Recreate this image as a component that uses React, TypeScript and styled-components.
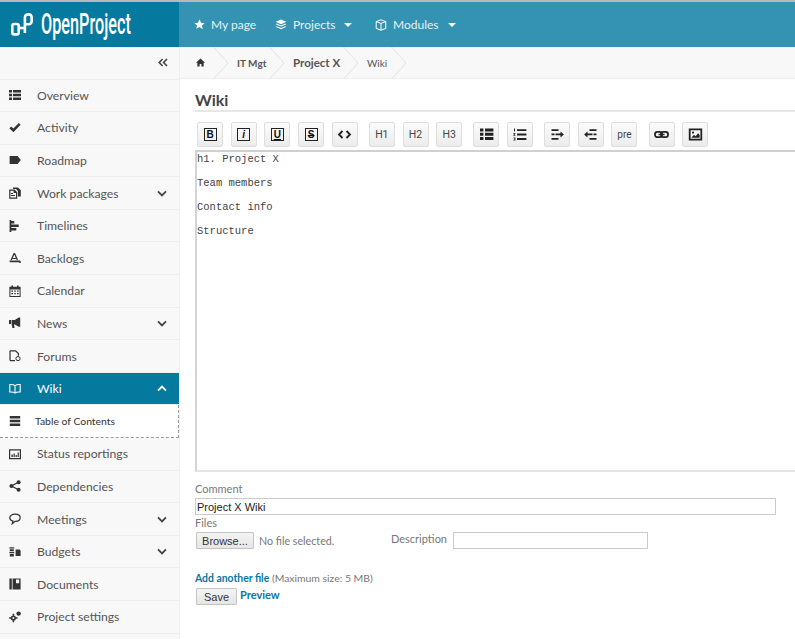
import React from 'react';
import styled, { createGlobalStyle } from 'styled-components';

const Global = createGlobalStyle`
    html, body {
        margin: 0;
        padding: 0;
        height: 100%;
        overflow: hidden;
        background: #fff;
        font-family: Lato, "Open Sans", sans-serif;
    }
`;

const Page = styled.div`
    width: 795px;
    height: 639px;
    overflow: hidden;
    border-top: 2px solid #b9b9b9;
    box-sizing: border-box;
`;

const Header = styled.header`
    height: 45px;
    display: flex;
    background: #3493b3;
`;

const Logo = styled.div`
    width: 179px;
    flex: none;
    background: #06799f;
    display: flex;
    align-items: center;
    padding-left: 11px;
    box-sizing: border-box;
    gap: 8px;
    color: #fff;
    svg {
        flex: none;
    }
`;

const LogoText = styled.span`
    font-family: Roboto, sans-serif;
    font-weight: 500;
    font-size: 29px;
    line-height: 1;
    display: inline-block;
    transform: scaleX(0.56);
    transform-origin: left center;
    white-space: nowrap;
`;

const Nav = styled.nav`
    display: flex;
    align-items: center;
    padding-left: 15px;
`;

const NavItem = styled.a<{ $width: number }>`
    width: ${(p) => p.$width}px;
    display: flex;
    align-items: center;
    color: #e6f1f5;
    font-size: 12px;
    gap: 6px;
    text-decoration: none;
    svg {
        flex: none;
    }
`;

const Caret = styled.span`
    width: 0;
    height: 0;
    margin-left: 3px;
    border-left: 4px solid transparent;
    border-right: 4px solid transparent;
    border-top: 4px solid #fff;
`;

const Body = styled.div`
    display: flex;
    height: 592px;
`;

const Sidebar = styled.aside`
    width: 180px;
    flex: none;
    background: #f8f8f8;
    border-right: 1px solid #efefef;
    box-sizing: border-box;
`;

const CollapseRow = styled.div`
    height: 32.5px;
    display: flex;
    align-items: center;
    justify-content: flex-end;
    padding-right: 11px;
    border-bottom: 1px solid #eeeeee;
    box-sizing: border-box;
`;

const MenuItem = styled.div<{ $active?: boolean; $sub?: boolean }>`
    height: 32.6px;
    box-sizing: border-box;
    display: flex;
    align-items: center;
    padding-left: 9px;
    padding-right: 12px;
    font-size: ${(p) => (p.$sub ? 10.4 : 12.2)}px;
    color: ${(p) => (p.$active ? '#fff' : p.$sub ? '#333' : '#555')};
    background: ${(p) => (p.$active ? '#06799f' : p.$sub ? '#fff' : 'transparent')};
    border-bottom: ${(p) => (p.$sub ? '1px dashed #999' : '1px solid #efefef')};
    border-right: ${(p) => (p.$sub ? '1px dashed #999' : 'none')};
    svg {
        flex: none;
    }
`;

const MenuLabel = styled.span<{ $sub?: boolean }>`
    flex: 1;
    margin-left: ${(p) => (p.$sub ? 14 : 16)}px;
    white-space: nowrap;
`;

const Main = styled.main`
    flex: 1;
    min-width: 0;
`;

const Breadcrumbs = styled.div`
    height: 32px;
    display: flex;
    align-items: center;
    background: #f8f8f8;
    border-bottom: 1px solid #eeeeee;
    box-sizing: border-box;
    padding-left: 16px;
`;

const Crumb = styled.span<{ $size: number; $bold?: boolean; $width: number }>`
    width: ${(p) => p.$width}px;
    font-size: ${(p) => p.$size}px;
    font-weight: ${(p) => (p.$bold ? 700 : 400)};
    color: #555;
    white-space: nowrap;
`;

const CrumbSep = styled.svg`
    width: 16px;
    height: 32px;
    flex: none;
    margin-right: 8px;
`;

const Content = styled.div`
    padding: 11px 0 0 15px;
`;

const Title = styled.h2`
    margin: 0;
    font-size: 16px;
    line-height: 20px;
    font-weight: 700;
    color: #444;
    border-bottom: 2px solid #e7e7e7;
`;

const Toolbar = styled.div`
    display: flex;
    gap: 7.7px;
    padding: 10px 0 3px 2px;
`;

const ToolButton = styled.button<{ $gapBefore?: boolean; $plain?: boolean }>`
    width: 26px;
    height: 25px;
    padding: 0;
    margin: 0 0 0 ${(p) => (p.$gapBefore ? 3.4 : 0)}px;
    flex: none;
    border: 1px solid #dedede;
    border-radius: 2px;
    background: linear-gradient(#fbfbfb, #ececec);
    display: flex;
    align-items: center;
    justify-content: center;
    font-family: Roboto, "Liberation Sans", sans-serif;
    font-size: ${(p) => (p.$plain ? 10 : 10.5)}px;
    color: #444;
`;

const BoxedLetter = styled.span<{ $italic?: boolean; $strike?: boolean; $under?: boolean }>`
    width: 13px;
    height: 13px;
    box-sizing: border-box;
    border: 1.5px solid #222;
    display: flex;
    align-items: center;
    justify-content: center;
    font-family: "Liberation Sans", sans-serif;
    font-weight: 700;
    font-size: 10px;
    line-height: 1;
    color: #111;
    font-style: ${(p) => (p.$italic ? 'italic' : 'normal')};
    text-decoration: ${(p) => (p.$strike ? 'line-through' : p.$under ? 'underline' : 'none')};
`;

const Editor = styled.textarea`
    display: block;
    width: 640px;
    height: 322px;
    margin: 0;
    padding: 1px 0;
    box-sizing: border-box;
    border: 1px solid #c9c9c9;
    border-bottom: 2px solid #e4e4e4;
    border-left: 2px solid #d4d4d4;
    border-top: 2px solid #d0d0d0;
    outline: none;
    resize: none;
    overflow: hidden;
    font-family: "Liberation Mono", monospace;
    font-size: 10.5px;
    line-height: 12px;
    color: #444;
`;

const FieldLabel = styled.div`
    font-size: 11px;
    line-height: 13px;
    color: #777;
`;

const CommentLabel = styled(FieldLabel)`
    margin-top: 10px;
    margin-bottom: 3px;
`;

const FilesLabel = styled(FieldLabel)`
    margin-top: 1px;
    margin-bottom: 3px;
`;

const TextInput = styled.input<{ $width: number }>`
    display: block;
    width: ${(p) => p.$width}px;
    height: 17px;
    box-sizing: border-box;
    padding: 0 1px;
    border: 1px solid #cbcbcb;
    outline: none;
    font-family: "Liberation Sans", sans-serif;
    font-size: 11px;
    color: #222;
`;

const FileRow = styled.div`
    display: flex;
    align-items: center;
    padding-left: 1px;
    color: #777;
    font-size: 10.7px;
`;

const FormButton = styled.button<{ $width: number }>`
    width: ${(p) => p.$width}px;
    height: 17px;
    padding: 0;
    flex: none;
    border: 1px solid #c4c4c4;
    border-radius: 1px;
    background: linear-gradient(#f4f4f4, #e6e6e6);
    font-family: "Liberation Sans", sans-serif;
    font-size: 11px;
    color: #333;
`;

const NoFile = styled.span`
    margin-left: 5px;
    width: 132px;
`;

const DescLabel = styled.span`
    font-size: 11px;
    color: #777;
    width: 62px;
    position: relative;
    top: -2px;
`;

const AddRow = styled.div`
    margin-top: 23px;
    font-size: 10.4px;
    line-height: 13px;
    color: #777;
`;

const Link = styled.a`
    font-weight: 700;
    color: #06799f;
`;

const SaveRow = styled.div`
    display: flex;
    align-items: flex-start;
    gap: 3px;
    padding-left: 1px;
    margin-top: 3px;
    font-size: 11px;
    line-height: 13px;
`;

const Glyph = ({ children, size = 12, color = '#333' }: { children: React.ReactNode; size?: number; color?: string }) => (
    <svg width={size} height={size} viewBox="0 0 12 12" fill={color} stroke="none">
        {children}
    </svg>
);

const icons: Record<string, React.ReactNode> = {
    overview: <path d="M0 1h3v2.4H0zM4 1h8v2.4H4zM0 4.8h3v2.4H0zM4 4.8h8v2.4H4zM0 8.6h3V11H0zM4 8.6h8V11H4z" />,
    activity: <path d="M0.4 6.2l1.8-1.8 2.2 2.2L9.8 1l1.8 1.8-7.2 7.4z" />,
    roadmap: <path d="M0.6 2h8L11.8 6l-3.2 4h-8z" />,
    packages: (
        <>
            <path d="M4 0.4h5l2.8 2.8v6.4H8.9V3.9L7 2H4z" />
            <path fillRule="evenodd" d="M0.2 2.6h5.4l2.6 2.6v6.6H0.2zM1.4 3.8v6.8h5.6V6H4.6V3.8z" />
            <path d="M2 6h2v1H2zM2 8h4v1H2z" />
        </>
    ),
    timelines: <path d="M0.6 0h1.7v12H0.6zM2.3 1h3v2.6h-3zM2.3 4.4h7.4v2.6H2.3zM2.3 8h5v2.6h-5z" />,
    backlogs: (
        <>
            <path d="M5.2 1.2L2.2 8M5.4 1.2L8.4 8" fill="none" stroke="#333" strokeWidth="1.3" />
            <path d="M0.6 8.6h10.4v1.6H0.6zM3.2 6h4v1H3.2z" />
            <circle cx="11" cy="10" r="1" />
        </>
    ),
    calendar: (
        <>
            <path fillRule="evenodd" d="M0.4 1.8h11.2V12H0.4zM1.4 4.6v6.4h9.2V4.6z" />
            <path d="M2.4 0.4h1.6v2.2H2.4zM8 0.4h1.6v2.2H8zM2.4 5.4h1.6v1.4H2.4zM5.2 5.4h1.6v1.4H5.2zM8 5.4h1.6v1.4H8zM2.4 7.9h1.6v1.4H2.4zM5.2 7.9h1.6v1.4H5.2zM8 7.9h1.6v1.4H8z" />
        </>
    ),
    news: <path d="M0 3h2v4H0zM2.6 3h3.2l4-2.6h1.4v9.4H9.8L5.8 7.4H5L5.6 11H3.4L2.6 7z" />,
    forums: (
        <>
            <path d="M1 0.8h5.6L9.4 3.6v2.2M6 10.6H1z M1 0.8v9.8" fill="none" stroke="#333" strokeWidth="1.2" />
            <circle cx="9" cy="8.6" r="2.1" fill="none" stroke="#333" strokeWidth="1" />
        </>
    ),
    wiki: (
        <path
            d="M6 2.6C5 1.8 3 1.4 0.8 1.6v7.4c2.2-.2 4.2 .2 5.2 1 1-.8 3-1.2 5.2-1V1.6C9 1.4 7 1.8 6 2.6zM6 2.6v7.4"
            fill="none"
            stroke="#fff"
            strokeWidth="1.1"
        />
    ),
    toc: <path d="M0.8 1h10.4v2.6H0.8zM0.8 4.7h10.4v2.6H0.8zM0.8 8.4h10.4v2.6H0.8z" />,
    status: (
        <>
            <path fillRule="evenodd" d="M0 1.2h12v10H0zM1.2 2.4v7.6h9.6V2.4z" />
            <path d="M2.4 6.6h1.4v2.4H2.4zM4.6 5.4h1.2v3.6H4.6zM6.6 7h1.2v2H6.6zM8.6 4.6h1.2v4.4H8.6z" />
        </>
    ),
    dependencies: (
        <>
            <circle cx="2.4" cy="6" r="2" />
            <circle cx="9.6" cy="2.2" r="2" />
            <circle cx="9.6" cy="9.8" r="2" />
            <path d="M2.4 6l7.2-3.8M2.4 6l7.2 3.8" fill="none" stroke="#333" strokeWidth="1.3" />
        </>
    ),
    meetings: (
        <path
            d="M6 1.2C2.9 1.2 0.8 2.7 0.8 4.8c0 1.6 1.3 2.9 3.2 3.4L3.2 10.8 6.2 8.4c3 0 5-1.5 5-3.6S9 1.2 6 1.2z"
            fill="none"
            stroke="#333"
            strokeWidth="1.2"
        />
    ),
    budgets: (
        <>
            <path d="M0.4 1.2h4.8v1.2H0.4zM0.8 3.2h4v2H0.8zM0.4 6h4.8v1.2H0.4zM0.8 8h4v2.6H0.8z" />
            <path d="M6.6 3.6h4.2l0.8 1.2v5.2H6.6zM6.6 6.4h3.4v1H6.6z" />
        </>
    ),
    documents: <path fillRule="evenodd" d="M0.4 0.4h2.4v11.2H0.4zM3.6 0.4h8v11.2h-8zM7 1.6v3.6h3.2V1.6z" />,
    settings: (
        <>
            <circle cx="4.4" cy="7" r="2.6" />
            <path d="M3.6 2.8h1.6v2H3.6zM3.6 9.2h1.6v2H3.6zM0.2 6.2h2v1.6H0.2zM6.6 6.2h2v1.6H6.6z" />
            <circle cx="4.4" cy="7" r="1" fill="#f8f8f8" />
            <circle cx="9.6" cy="2.6" r="2.2" />
        </>
    ),
};

const MenuChevron = ({ up, color }: { up?: boolean; color: string }) => (
    <svg width="10" height="7" viewBox="0 0 10 7">
        <path d={up ? 'M1 5.6L5 1.6l4 4' : 'M1 1.4l4 4 4-4'} fill="none" stroke={color} strokeWidth="1.8" />
    </svg>
);

const menu = [
    { label: 'Overview', icon: 'overview' },
    { label: 'Activity', icon: 'activity' },
    { label: 'Roadmap', icon: 'roadmap' },
    { label: 'Work packages', icon: 'packages', more: true },
    { label: 'Timelines', icon: 'timelines' },
    { label: 'Backlogs', icon: 'backlogs' },
    { label: 'Calendar', icon: 'calendar' },
    { label: 'News', icon: 'news', more: true },
    { label: 'Forums', icon: 'forums' },
    { label: 'Wiki', icon: 'wiki', more: true, active: true },
    { label: 'Table of Contents', icon: 'toc', sub: true },
    { label: 'Status reportings', icon: 'status' },
    { label: 'Dependencies', icon: 'dependencies' },
    { label: 'Meetings', icon: 'meetings', more: true },
    { label: 'Budgets', icon: 'budgets', more: true },
    { label: 'Documents', icon: 'documents' },
    { label: 'Project settings', icon: 'settings' },
];

const Sep = () => (
    <CrumbSep viewBox="0 0 16 32">
        <path d="M0.5 0L15 16 0.5 32" fill="none" stroke="#e2e2e2" strokeWidth="1" />
    </CrumbSep>
);

const ToolIcon = ({ children }: { children: React.ReactNode }) => (
    <svg width="15" height="13" viewBox="0 0 15 13" fill="#222">
        {children}
    </svg>
);

export default function App() {
    return (
        <Page>
            <Global />
            <Header>
                <Logo>
                    <svg width="22" height="23" viewBox="0 0 22 23" fill="none" stroke="#fff" strokeWidth="2.6">
                        <rect x="1.3" y="11" width="6.4" height="10.4" rx="2" />
                        <path d="M7.7 15h6.2" />
                        <path d="M13.9 20V4.4a3 3 0 0 1 3-3h.8a3 3 0 0 1 3 3v3.8a3 3 0 0 1-3 3h-3.8" />
                    </svg>
                    <LogoText>OpenProject</LogoText>
                </Logo>
                <Nav>
                    <NavItem href="#" $width={81}>
                        <svg width="11" height="11" viewBox="0 0 12 12" fill="#fff">
                            <path d="M6 .4l1.7 3.6 3.9.5-2.9 2.7.8 3.9L6 8.7l-3.5 1.9.8-3.9L.4 4.5l3.9-.5z" />
                        </svg>
                        My page
                    </NavItem>
                    <NavItem href="#" $width={100}>
                        <svg width="12" height="12" viewBox="0 0 12 12" fill="#fff">
                            <path d="M6 .4l5.4 2.4L6 5.2.6 2.8z" />
                            <path d="M1.8 4.6L6 6.5l4.2-1.9 1.2.6L6 7.6.6 5.2z" />
                            <path d="M1.8 7.2L6 9.1l4.2-1.9 1.2.6L6 10.2.6 7.8z" />
                        </svg>
                        Projects
                        <Caret />
                    </NavItem>
                    <NavItem href="#" $width={90}>
                        <svg width="12" height="12" viewBox="0 0 12 12" fill="none" stroke="#fff" strokeWidth="1">
                            <path d="M6 .8l4.8 1.8v6.8L6 11.2 1.2 9.4V2.6zM1.2 2.6L6 4.4l4.8-1.8M6 4.4v6.8" />
                        </svg>
                        Modules
                        <Caret />
                    </NavItem>
                </Nav>
            </Header>
            <Body>
                <Sidebar>
                    <CollapseRow>
                        <svg width="10" height="9" viewBox="0 0 10 9" fill="none" stroke="#444" strokeWidth="1.6">
                            <path d="M4.6 1L1.2 4.5l3.4 3.5M9 1L5.6 4.5 9 8" />
                        </svg>
                    </CollapseRow>
                    {menu.map((m) => (
                        <MenuItem key={m.label} $active={m.active} $sub={m.sub}>
                            <Glyph color={m.active ? '#fff' : '#333'}>{icons[m.icon]}</Glyph>
                            <MenuLabel $sub={m.sub}>{m.label}</MenuLabel>
                            {m.more && <MenuChevron up={m.active} color={m.active ? '#fff' : '#444'} />}
                        </MenuItem>
                    ))}
                </Sidebar>
                <Main>
                    <Breadcrumbs>
                        <Crumb $size={11} $width={17}>
                            <svg width="9" height="9" viewBox="0 0 12 12" fill="#333">
                                <path d="M6 .8L0 6.2h1.8V11.4h3V8h2.4v3.4h3V6.2H12z" />
                            </svg>
                        </Crumb>
                        <Sep />
                        <Crumb $size={10} $bold $width={32}>IT Mgt</Crumb>
                        <Sep />
                        <Crumb $size={11.5} $bold $width={50}>Project X</Crumb>
                        <Sep />
                        <Crumb $size={10} $width={24}>Wiki</Crumb>
                        <Sep />
                    </Breadcrumbs>
                    <Content>
                        <Title>Wiki</Title>
                        <Toolbar>
                            <ToolButton><BoxedLetter>B</BoxedLetter></ToolButton>
                            <ToolButton><BoxedLetter $italic>i</BoxedLetter></ToolButton>
                            <ToolButton><BoxedLetter $under>U</BoxedLetter></ToolButton>
                            <ToolButton><BoxedLetter $strike>S</BoxedLetter></ToolButton>
                            <ToolButton>
                                <ToolIcon>
                                    <path d="M5.5 3L2 6.5 5.5 10M9.5 3L13 6.5 9.5 10" fill="none" stroke="#222" strokeWidth="1.8" />
                                </ToolIcon>
                            </ToolButton>
                            <ToolButton $gapBefore>H1</ToolButton>
                            <ToolButton>H2</ToolButton>
                            <ToolButton>H3</ToolButton>
                            <ToolButton $gapBefore>
                                <ToolIcon>
                                    <path d="M1 .6h3.4v3H1zM6 .6h8.4v3H6zM1 4.8h3.4v3H1zM6 4.8h8.4v3H6zM1 9h3.4v3H1zM6 9h8.4v3H6z" />
                                </ToolIcon>
                            </ToolButton>
                            <ToolButton>
                                <ToolIcon>
                                    <path d="M5 1.2h9.4v1.9H5zM5 5.6h9.4v1.9H5zM5 10h9.4v1.9H5zM2 .6h1v3H2zM1.4 5h2v.8l-1 1.2h1v.8h-2V7l1-1.2h-1zM1.4 9.4h2v3h-2v-.7h1.2v-.5H1.8v-.6h.8v-.5H1.4z" />
                                </ToolIcon>
                            </ToolButton>
                            <ToolButton $gapBefore>
                                <ToolIcon>
                                    <path d="M1.5 1.2h7v1.7h-7zM1.5 5.6h3v1.7h-3zM1.5 10h7v1.7h-7zM5.5 5.6h5V3.6l3.4 2.9-3.4 2.9V7.3h-5z" />
                                </ToolIcon>
                            </ToolButton>
                            <ToolButton>
                                <ToolIcon>
                                    <path d="M6.5 1.2h7v1.7h-7zM10.5 5.6h3v1.7h-3zM6.5 10h7v1.7h-7zM9.5 5.6h-5V3.6L1.1 6.5l3.4 2.9V7.3h5z" />
                                </ToolIcon>
                            </ToolButton>
                            <ToolButton $plain>pre</ToolButton>
                            <ToolButton $gapBefore>
                                <ToolIcon>
                                    <rect x="1" y="3.8" width="7" height="5.4" rx="2.4" fill="none" stroke="#222" strokeWidth="1.8" />
                                    <rect x="7" y="3.8" width="7" height="5.4" rx="2.4" fill="none" stroke="#222" strokeWidth="1.8" />
                                    <path d="M4.5 5.8h6v1.4h-6z" />
                                </ToolIcon>
                            </ToolButton>
                            <ToolButton>
                                <ToolIcon>
                                    <path fillRule="evenodd" d="M.8 .4h13.4v12.2H.8zM2.6 2.2v8.6h9.8V2.2z" />
                                    <path d="M3.4 9.8L6 6.8l1.6 1.4 2.6-3 1.4 1.8v2.8z" />
                                    <circle cx="5" cy="4.6" r="1.1" />
                                </ToolIcon>
                            </ToolButton>
                        </Toolbar>
                        <Editor
                            readOnly
                            defaultValue={'h1. Project X\n\nTeam members\n\nContact info\n\nStructure'}
                        />
                        <CommentLabel>Comment</CommentLabel>
                        <TextInput $width={581} readOnly defaultValue="Project X Wiki" />
                        <FilesLabel>Files</FilesLabel>
                        <FileRow>
                            <FormButton $width={58}>Browse...</FormButton>
                            <NoFile>No file selected.</NoFile>
                            <DescLabel>Description</DescLabel>
                            <TextInput $width={195} readOnly />
                        </FileRow>
                        <AddRow>
                            <Link>Add another file</Link> (Maximum size: 5 MB)
                        </AddRow>
                        <SaveRow>
                            <FormButton $width={41}>Save</FormButton>
                            <Link>Preview</Link>
                        </SaveRow>
                    </Content>
                </Main>
            </Body>
        </Page>
    );
}
